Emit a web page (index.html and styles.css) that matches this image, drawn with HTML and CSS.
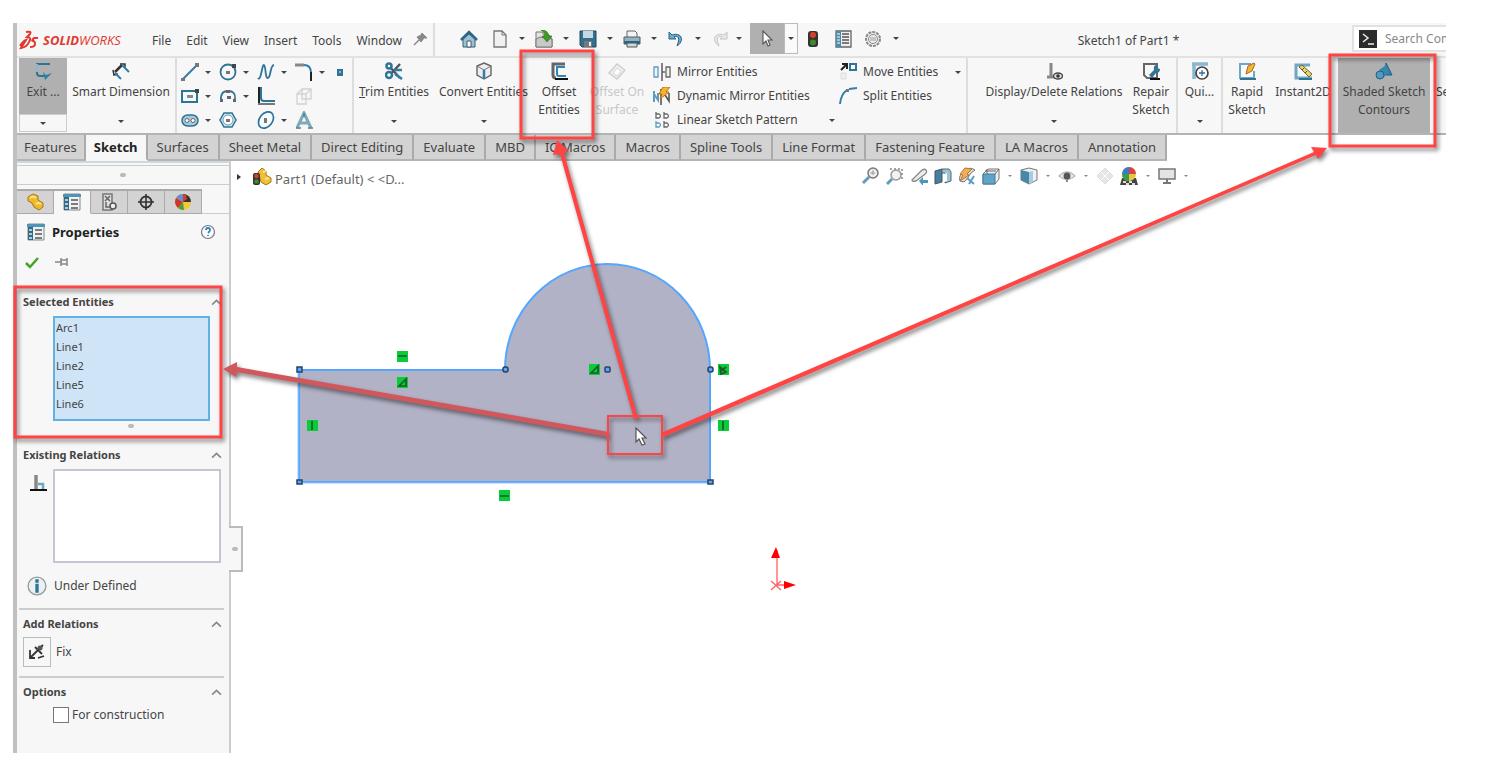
FILE: index.html
```html
<!DOCTYPE html>
<html lang="en">
<head>
    <meta charset="UTF-8">
    <meta name="viewport" content="width=device-width, initial-scale=1.0">
    <title>SOLIDWORKS - Sketch1 of Part1</title>
    <link rel="stylesheet" href="styles.css">
</head>
<body>

    <!-- Icon set -->
    <svg class="sprite" aria-hidden="true">
        <symbol id="i-pin" viewBox="0 0 18 18"><path d="M2 15l5-5" stroke="#888" stroke-width="1.5"/><path d="M10 3l5 5h-3l-3 4-4-5 4-2z" fill="#888" stroke="#888"/></symbol>
        <symbol id="i-home" viewBox="0 0 18 18"><path d="M3 9v8h12V9L9 4z" fill="#9dc0d2" stroke="#3b5d70"/><path d="M1 10l8-8 8 8" fill="none" stroke="#2c6687" stroke-width="2.5"/><path d="M7 11h4v6H7z" fill="#fff" stroke="#3b5d70"/></symbol>
        <symbol id="i-new" viewBox="0 0 18 18"><path d="M3 1h8l4 4v12H3z" fill="#f1f1f1" stroke="#777" stroke-width="1.3"/><path d="M11 1v4h4" fill="none" stroke="#777"/></symbol>
        <symbol id="i-open" viewBox="0 0 18 18"><path d="M1 2h6l2 3h5l3 4v8H1z" fill="#e4e4e4" stroke="#777"/><path d="M1 17V9l4-2 12 2v8z" fill="#c9c9c9" stroke="#777"/><path d="M6 0c5 0 7 2 8 6h3l-5 6-5-6h3c0-2-1-4-4-6z" fill="#3f9a27" stroke="#276d15" stroke-width=".6"/></symbol>
        <symbol id="i-save" viewBox="0 0 18 18"><path d="M1 1h16v16H3l-2-2z" fill="#33708f" stroke="#24485c"/><path d="M4 1h10v7H4z" fill="#c3dae5"/><path d="M5 11h8v6H5z" fill="#777"/><path d="M10 12h2v4h-2z" fill="#eee"/></symbol>
        <symbol id="i-print" viewBox="0 0 18 18"><path d="M4 7V1h8l2 2v4" fill="#f3f3f3" stroke="#666"/><path d="M1 7h16v7H1z" fill="#9ab1bd" stroke="#44606e"/><path d="M1 11h16v3H1z" fill="#2c6687"/><path d="M4 13h10v4H4z" fill="#c9d7de" stroke="#555"/></symbol>
        <symbol id="i-undo" viewBox="0 0 18 18"><path d="M2 2v7h7L7 7c3-2 6 0 4 6l-1 3c5-3 6-9 2-11-2-1-5-1-7 0z" fill="#6fa9c6" stroke="#24668a"/></symbol>
        <symbol id="i-redo" viewBox="0 0 18 18"><path d="M16 2v7H9l2-2C8 5 5 7 7 13l1 3C3 13 2 7 6 5c2-1 5-1 7 0z" fill="#e8e8e8" stroke="#c6c6c6"/></symbol>
        <symbol id="i-cursor" viewBox="0 0 18 18"><path d="M5 1v13l3-3 2 5 2-1-2-5h4z" fill="#fff" stroke="#555" stroke-width="1.1"/></symbol>
        <symbol id="i-traffic" viewBox="0 0 18 18"><rect x="4" y="1" width="10" height="16" rx="3" fill="#333"/><circle cx="9" cy="5" r="3" fill="#d8402b"/><circle cx="9" cy="12.500" r="3" fill="#3f8b26"/></symbol>
        <symbol id="i-options" viewBox="0 0 18 18"><path d="M2 1h15v16H2z" fill="#eee" stroke="#666" stroke-width="1.3"/><path d="M2 1h5v16H2z" fill="#4c8bac"/><path d="M3 4h3M3 7h3M3 10h3M3 13h3" stroke="#fff"/><path d="M8 4h7M8 7h7M8 10h7M8 13h7" stroke="#555" stroke-width="1.4"/></symbol>
        <symbol id="i-gear" viewBox="0 0 18 18"><circle cx="9" cy="9" r="7" fill="#eee" stroke="#888" stroke-width="2" stroke-dasharray="3 1"/><circle cx="9" cy="9" r="4.500" fill="none" stroke="#888"/><path d="M6 8h6M6 10h6" stroke="#999"/></symbol>
        <symbol id="i-exit" viewBox="0 0 18 18"><path d="M16 2H3v9q0 3 3 3h5" fill="none" stroke="#2f7396" stroke-width="2"/><path d="M3 2v8" stroke="#8ab8d0" stroke-width="2"/><path d="M9 10l3 3 6-2-7 7z" fill="#2f7fa9"/></symbol>
        <symbol id="i-dim" viewBox="0 0 18 18"><path d="M3 10l7-7" stroke="#333" stroke-width="2.500"/><path d="M1 8l1 5 4-1M8 2h5v4" fill="none" stroke="#333" stroke-width="1.500"/><path d="M3 11l6 6M10 3l7 7" stroke="#2f7fa9" stroke-width="2"/></symbol>
        <symbol id="i-line" viewBox="0 0 18 18"><path d="M2 16L16 2" stroke="#2f7fa9" stroke-width="2"/><path d="M0 15h4v3H0zM14 0h4v4h-4z" fill="#777"/></symbol>
        <symbol id="i-circle" viewBox="0 0 18 18"><circle cx="9" cy="9" r="7.500" fill="none" stroke="#2f7396" stroke-width="1.800"/><path d="M7 8h4v3H7z" fill="#777"/><path d="M13 1h4v4h-4z" fill="#444"/></symbol>
        <symbol id="i-spline" viewBox="0 0 18 18"><path d="M1 15C4 19 5 1 7 2s1 14 4 13 2-13 6-13" fill="none" stroke="#2f7396" stroke-width="1.800"/></symbol>
        <symbol id="i-fillet" viewBox="0 0 18 18"><path d="M0 2h9" stroke="#888" stroke-width="3"/><path d="M9 2q7 0 7 8" fill="none" stroke="#2f7fa9" stroke-width="2"/><path d="M16 9v9" stroke="#222" stroke-width="2"/></symbol>
        <symbol id="i-point" viewBox="0 0 18 18"><path d="M4 6h6v7H4z" fill="#2f7396"/><path d="M6 8h2v2H6z" fill="#8ab8d0"/></symbol>
        <symbol id="i-rect" viewBox="0 0 18 18"><path d="M1 4h15v11H1z" fill="#f4fbff" stroke="#2f7396" stroke-width="2"/><path d="M6 8h6v3H6z" fill="#888"/><path d="M14 2h4v4h-4z" fill="#444"/></symbol>
        <symbol id="i-arc" viewBox="0 0 18 18"><path d="M2 14Q1 4 9 4t7 8" fill="none" stroke="#2f7396" stroke-width="1.800"/><path d="M1 12h3v3H1zM14 12h3v3h-3zM8 9h4v3H8zM7 3h4v3H7z" fill="#666"/></symbol>
        <symbol id="i-lshape" viewBox="0 0 18 18"><path d="M4 0v11q0 3 3 3h11" fill="none" stroke="#2f7396" stroke-width="2"/><path d="M2 0v16" stroke="#222" stroke-width="2"/><path d="M1 17h17" stroke="#777" stroke-width="2"/></symbol>
        <symbol id="i-plane" viewBox="0 0 18 18"><path d="M7 2h9v10H7zM2 7h9v10H2zM7 2L2 7M16 2l-5 5" fill="none" stroke="#d2d2d2" stroke-width="1.300"/></symbol>
        <symbol id="i-slot" viewBox="0 0 18 18"><rect x="1" y="4" width="16" height="11" rx="5.500" fill="#a8c9da" stroke="#2f7396" stroke-width="1.500"/><circle cx="6" cy="9.500" r="2" fill="#fff" stroke="#666"/><circle cx="12" cy="9.500" r="2" fill="#fff" stroke="#666"/></symbol>
        <symbol id="i-poly" viewBox="0 0 18 18"><path d="M5 2h8l4 7-4 7H5L1 9z" fill="#d4e5ee" stroke="#2f7396" stroke-width="1.500"/><circle cx="9" cy="9" r="5" fill="#fff" stroke="#7199ad"/><path d="M7 8h4v3H7z" fill="#777"/></symbol>
        <symbol id="i-ellipse" viewBox="0 0 18 18"><ellipse cx="9" cy="9" rx="6.500" ry="9" transform="rotate(38 9 9)" fill="#f4fbff" stroke="#2f7396" stroke-width="1.700"/><path d="M7 7h3v5H7z" fill="#777"/></symbol>
        <symbol id="i-text" viewBox="0 0 18 18"><path d="M2 17L9 2l7 15M5 12h8" fill="none" stroke="#7fa8bb" stroke-width="3"/><path d="M1 17h5M13 17h5M9 2v4" stroke="#567d91" stroke-width="1.500"/></symbol>
        <symbol id="i-trim" viewBox="0 0 18 18"><path d="M3 3l12 13M15 2L3 15" stroke="#555" stroke-width="2.500"/><circle cx="4" cy="4" r="2.500" fill="#fff" stroke="#2f7396" stroke-width="2.500"/><circle cx="4" cy="13" r="3" fill="#fff" stroke="#2f7396" stroke-width="2.500"/><path d="M9 8h8M10 12l7 5" stroke="#2f7fa9" stroke-width="2.500"/></symbol>
        <symbol id="i-convert" viewBox="0 0 18 18"><path d="M9 1l7 3v9l-7 4-7-4V4z" fill="#eee" stroke="#666" stroke-width="1.400"/><path d="M2 4l7 4 7-4" fill="none" stroke="#777"/><path d="M9 8v9" stroke="#2f7fa9" stroke-width="2.500"/></symbol>
        <symbol id="i-offset" viewBox="0 0 18 18"><path d="M15 2H3v11q0 3 3 3" fill="none" stroke="#666" stroke-width="3"/><path d="M15 5H7v7q0 2 2 2h7" fill="none" stroke="#2f86b3" stroke-width="2"/><path d="M5 17h13" stroke="#111" stroke-width="2"/></symbol>
        <symbol id="i-offsurf" viewBox="0 0 18 18"><path d="M1 11l8-9 8 6-8 9z" fill="#efefef" stroke="#cfcfcf" stroke-width="1.400"/><path d="M5 11l4-5 4 3-4 5z" fill="#fff" stroke="#d6d6d6"/></symbol>
        <symbol id="i-mirror" viewBox="0 0 18 18"><path d="M1 4h4v10H1z" fill="#eaf4f9" stroke="#5d9cbc" stroke-width="1.300"/><path d="M9 0v18" stroke="#444" stroke-width="1.300"/><path d="M13 4h4v10h-4zM9 9h3" fill="#f1f1f1" stroke="#666" stroke-width="1.300"/></symbol>
        <symbol id="i-dynmirror" viewBox="0 0 18 18"><path d="M1 4v11M1 7l4 6V6" fill="none" stroke="#5d9cbc" stroke-width="2"/><path d="M8 2v16M12 8l4 6V6" fill="none" stroke="#555" stroke-width="1.600"/><path d="M10 0h7l-4 5h3l-9 7 2-5H6z" fill="#f3b530" stroke="#c36e16"/></symbol>
        <symbol id="i-pattern" viewBox="0 0 18 18"><g fill="#fff" stroke-width="1.300"><path d="M3 1v6h3q3-2 0-4H3M11 1v6h3q3-2 0-4h-3" stroke="#666"/><path d="M3 10v6h3q3-2 0-4H3" stroke="#5d9cbc"/><path d="M11 10v6h3q3-2 0-4h-3" stroke="#666"/></g></symbol>
        <symbol id="i-move" viewBox="0 0 18 18"><path d="M2 7l5-5M3 1h5v5" fill="none" stroke="#222" stroke-width="2"/><path d="M11 1h6v6h-6z" fill="#fff" stroke="#2f7396" stroke-width="2"/><path d="M2 10h5v6H2z" fill="#eee" stroke="#ddd"/></symbol>
        <symbol id="i-split" viewBox="0 0 18 18"><path d="M1 17Q2 7 8 3" fill="none" stroke="#2f7fa9" stroke-width="2"/><path d="M10 2l8-1" stroke="#2f7fa9" stroke-width="2"/><path d="M7 2h3v3H7z" fill="#777"/></symbol>
        <symbol id="i-relations" viewBox="0 0 18 18"><path d="M6 1v14M2 15h9" stroke="#888" stroke-width="3"/><ellipse cx="13" cy="14" rx="4.500" ry="3" fill="#ddd" stroke="#444" stroke-width="1.300"/><circle cx="13" cy="14" r="1.800" fill="#333"/></symbol>
        <symbol id="i-repair" viewBox="0 0 18 18"><path d="M2 2h13v14H5l-3-3z" fill="#f7f7f7" stroke="#666" stroke-width="2"/><path d="M7 13l5-5q-1-5 3-5v3l3 1q0 4-4 4l-4 5z" fill="#2f7396"/><path d="M8 17h10" stroke="#111" stroke-width="2"/></symbol>
        <symbol id="i-snaps" viewBox="0 0 18 18"><path d="M1 2h16M3 1v16" stroke="#8ab8d0" stroke-width="3.500"/><circle cx="11" cy="11" r="6" fill="#fff" stroke="#444" stroke-width="1.700"/><path d="M8 11h6M11 8v6" stroke="#2f7396" stroke-width="1.300"/></symbol>
        <symbol id="i-rapid" viewBox="0 0 18 18"><path d="M13 2H2v14h14V9" fill="#f8fcff" stroke="#6ea8c3" stroke-width="2"/><path d="M2 17h16" stroke="#2f7396" stroke-width="2"/><path d="M8 12l2-8 6-3 1 1-3 7z" fill="#f5b52d" stroke="#b4641c"/></symbol>
        <symbol id="i-instant" viewBox="0 0 18 18"><path d="M16 3H2v13h16" fill="#f3f9fc" stroke="#6ea8c3" stroke-width="3"/><path d="M5 17h13" stroke="#2f7396" stroke-width="2"/><path d="M5 5l3-2 10 9-3 3z" fill="#f0d35b" stroke="#6b6344"/><path d="M8 8l2-2M11 11l2-2" stroke="#555"/></symbol>
        <symbol id="i-shaded" viewBox="0 0 18 18"><path d="M10 13l1-12 6 12z" fill="#2f7fa9" stroke="#255f7e"/><path d="M4 8l7-5 3 7-5 5z" fill="#3a87ae"/><circle cx="5" cy="13" r="4" fill="#4f9bc2" stroke="#255f7e"/></symbol>
        <symbol id="i-cmd" viewBox="0 0 18 18"><path d="M0 0h18v18H0z" fill="#2c2c2c"/><path d="M4 4l5 4-5 4M9 14h6" fill="none" stroke="#eee" stroke-width="1.500"/></symbol>
        <symbol id="i-part" viewBox="0 0 18 18"><path d="M2 4l5-3 5 2v4l5 3v4l-4 3-5-3-2-4-4-2z" fill="#eeb92a" stroke="#a87613"/><path d="M4 5q3-3 6 0M10 11q2-2 5 0" fill="none" stroke="#fbe58a" stroke-width="2"/></symbol>
        <symbol id="i-props" viewBox="0 0 18 18"><path d="M1 1h16v16H1z" fill="#f1f1f1" stroke="#888"/><path d="M0 1h18v3H0z" fill="#4d94b8"/><path d="M1 4h5v13H1z" fill="#346a86"/><path d="M2 7h3M2 11h3M2 15h3" stroke="#dcebf2" stroke-width="1.500"/><path d="M8 7h7M8 11h7M8 15h7" stroke="#555" stroke-width="1.700"/></symbol>
        <symbol id="i-config" viewBox="0 0 18 18"><path d="M3 1h9v16H3z" fill="#ddd" stroke="#777" stroke-width="1.500"/><path d="M5 3l5 5M10 3L5 8M6 9v5h5" fill="none" stroke="#666" stroke-width="1.500"/><circle cx="13" cy="13" r="3" fill="#eee" stroke="#555" stroke-width="1.500"/></symbol>
        <symbol id="i-target" viewBox="0 0 18 18"><circle cx="9" cy="9" r="5.500" fill="none" stroke="#333" stroke-width="1.800"/><path d="M9 1v16M1 9h16" stroke="#333" stroke-width="1.600"/></symbol>
        <symbol id="i-ball" viewBox="0 0 18 18"><circle cx="9" cy="9" r="8" fill="#f3c735"/><path d="M9 9L2 5a8 8 0 0 1 7-4z" fill="#5e91d8"/><path d="M9 9V1a8 8 0 0 1 8 8z" fill="#333"/><path d="M9 9L2 5a8 8 0 0 0 2 10z" fill="#cf372d"/><path d="M9 9l-5 6a8 8 0 0 0 6 2z" fill="#48a045"/><path d="M9 9V1l3 1 1 4z" fill="#d63b31"/></symbol>
        <symbol id="i-help" viewBox="0 0 18 18"><circle cx="9" cy="9" r="6.500" fill="#fafafa" stroke="#778" stroke-width="1.200"/><path d="M7 7q0-2 2-2t2 2q0 1-2 3M9 12v1" fill="none" stroke="#2f86b3" stroke-width="1.800"/></symbol>
        <symbol id="i-check" viewBox="0 0 18 18"><path d="M3 10l4 4 8-9" fill="none" stroke="#43a326" stroke-width="2.500"/></symbol>
        <symbol id="i-pushpin" viewBox="0 0 18 18"><path d="M2 9h7M8 5v8M8 7h6M8 11h6M14 5v8" fill="none" stroke="#888" stroke-width="1.500"/></symbol>
        <symbol id="i-perp" viewBox="0 0 18 18"><path d="M7 1v14" stroke="#888" stroke-width="3.500"/><path d="M9 10h5v5" fill="none" stroke="#6ea8c3" stroke-width="2.500"/><path d="M1 16h17" stroke="#111" stroke-width="2"/></symbol>
        <symbol id="i-info" viewBox="0 0 18 18"><circle cx="9" cy="9" r="8" fill="#eaf1f4" stroke="#999" stroke-width="1.200"/><path d="M9 3v3M9 7v8" stroke="#2f7396" stroke-width="3"/></symbol>
        <symbol id="i-fix" viewBox="0 0 18 18"><path d="M2 15L15 2M7 4l7 7M2 7v8h5M10 15l6-2" fill="none" stroke="#333" stroke-width="1.800"/><circle cx="12" cy="5" r="2.500" fill="#555"/></symbol>
        <symbol id="i-zoomfit" viewBox="0 0 18 18"><path d="M1 16l6-6" stroke="#5d9cbc" stroke-width="3"/><circle cx="11" cy="6" r="5" fill="#eee" stroke="#777" stroke-width="1.500"/><path d="M8 6h5M11 3v5" stroke="#999"/></symbol>
        <symbol id="i-zoomarea" viewBox="0 0 18 18"><path d="M1 17l5-5" stroke="#5d9cbc" stroke-width="3"/><circle cx="10" cy="8" r="5" fill="#f1f1f1" stroke="#999" stroke-width="1.500"/><path d="M4 2h12v11" fill="none" stroke="#888" stroke-dasharray="2 2" stroke-width="1.500"/></symbol>
        <symbol id="i-prev" viewBox="0 0 18 18"><path d="M2 13l9-9q3-3 5-1t-2 5l-8 6q-4 1-4-1z" fill="#ececec" stroke="#888" stroke-width="1.300"/><path d="M9 14l4-4v3h5v3h-5v3z" fill="#4e95b9"/></symbol>
        <symbol id="i-section" viewBox="0 0 18 18"><path d="M1 4l7-2v13l-7 2z" fill="#487f9c" stroke="#456"/><path d="M8 2h7l2 3v9l-6 2V6H8z" fill="#9dc3d6" stroke="#567"/><path d="M10 7l3-1v8l-3 1z" fill="#fff"/></symbol>
        <symbol id="i-dynview" viewBox="0 0 18 18"><path d="M2 14q-2-5 4-10 6-5 11-1-5 3-6 6t-5 6z" fill="#ddd" stroke="#777"/><path d="M7 1l7 1-5 5 2 1-9 6 3-6-3-1z" fill="#f0b058" stroke="#bd7132"/><path d="M9 11l7 6M16 9l-5 8" stroke="#5d9cbc" stroke-width="2"/></symbol>
        <symbol id="i-cube" viewBox="0 0 18 18"><path d="M1 7l5-5h11v10l-4 5H1z" fill="#eee" stroke="#777"/><path d="M1 7h12v10H1z" fill="#5fa4c6" stroke="#3f7d9d"/><path d="M3 4h11M5 2v5M13 7l4-5" stroke="#666"/></symbol>
        <symbol id="i-style" viewBox="0 0 18 18"><path d="M9 1l8 2v10l-8 4-8-4V3z" fill="#f0f0f0" stroke="#777"/><path d="M1 3l8 2v12l-8-4z" fill="#4688a8"/><path d="M9 5l4-1v11l-4 2z" fill="#a9ccdc"/></symbol>
        <symbol id="i-eye" viewBox="0 0 18 18"><path d="M1 9q8-8 16 0-8 7-16 0z" fill="#eee" stroke="#bbb" stroke-width="1.300"/><circle cx="9" cy="9" r="3.500" fill="#555"/><path d="M9 12v3" stroke="#888" stroke-width="2"/></symbol>
        <symbol id="i-appear" viewBox="0 0 18 18"><path d="M9 1l8 8-8 8-8-8z" fill="#e6e6e6" stroke="#ddd"/><path d="M5 5l8 8M13 5l-8 8" stroke="#fff"/></symbol>
        <symbol id="i-scene" viewBox="0 0 18 18"><path d="M0 18l2-7h14l2 7z" fill="#444"/><path d="M3 15h3M9 15h3M6 17h3M12 17h3" stroke="#ddd" stroke-width="2"/><circle cx="9" cy="7" r="7" fill="#e5c840"/><path d="M9 7V0a7 7 0 0 0-7 7z" fill="#3979cf"/><path d="M9 7V0a7 7 0 0 1 7 7z" fill="#d74340"/><path d="M9 7H2a7 7 0 0 0 7 7z" fill="#3b9d4a"/></symbol>
        <symbol id="i-monitor" viewBox="0 0 18 18"><path d="M1 2h16v10H1z" fill="#e4e4e4" stroke="#777" stroke-width="1.500"/><path d="M9 12v4M5 16h8" stroke="#777" stroke-width="2"/></symbol>
        <symbol id="i-chev" viewBox="0 0 10 10"><path d="M1 7l4-4 4 4" fill="none" stroke="#888" stroke-width="1.500"/></symbol>
    </svg>

    <main class="app">

        <!-- Menu bar -->
        <header class="menubar">
            <div class="logo">
                <svg class="logo-mark" viewBox="0 0 20 20" aria-hidden="true"><path d="M7 2q6-1 4 2L8 7q5 0 2 5-2 5-8 6l5-8q-3 1-6 6M11 17q5 0 5-3t-2-3 1-3h4" fill="none" stroke="#e0392f" stroke-width="2"/></svg>
                <span><b>SOLID</b>WORKS</span>
            </div>
            <nav class="menus">
                <button>File</button>
                <button>Edit</button>
                <button>View</button>
                <button>Insert</button>
                <button>Tools</button>
                <button>Window</button>
            </nav>
            <button class="pin" aria-label="Pin menu"><svg><use href="#i-pin"/></svg></button>
            <div class="quick">
                <button class="home" aria-label="Home"><svg><use href="#i-home"/></svg></button>
                <button aria-label="New"><svg><use href="#i-new"/></svg></button><button class="drop" aria-label="New options"></button>
                <button aria-label="Open"><svg><use href="#i-open"/></svg></button><button class="drop" aria-label="Open options"></button>
                <button aria-label="Save"><svg><use href="#i-save"/></svg></button><button class="drop" aria-label="Save options"></button>
                <button aria-label="Print"><svg><use href="#i-print"/></svg></button><button class="drop" aria-label="Print options"></button>
                <button aria-label="Undo"><svg><use href="#i-undo"/></svg></button><button class="drop" aria-label="Undo options"></button>
                <button aria-label="Redo"><svg><use href="#i-redo"/></svg></button><button class="drop narrow" aria-label="Redo options"></button>
                <button class="select-tool" aria-label="Select"><svg><use href="#i-cursor"/></svg></button><button class="drop select-drop" aria-label="Select options"></button>
                <button class="wide" aria-label="Rebuild"><svg><use href="#i-traffic"/></svg></button>
                <button class="wide" aria-label="File properties"><svg><use href="#i-options"/></svg></button>
                <button class="wide" aria-label="Options"><svg><use href="#i-gear"/></svg></button><button class="drop narrow" aria-label="More options"></button>
            </div>
            <div class="doc-title">Sketch1 of Part1 *</div>
            <div class="search">
                <svg><use href="#i-cmd"/></svg>
                <input type="text" placeholder="Search Com" aria-label="Search commands">
            </div>
        </header>

        <!-- Ribbon -->
        <section class="ribbon">
            <div class="group first">
                <div class="exit">
                    <button class="exit-main"><svg><use href="#i-exit"/></svg>Exit ...</button>
                    <button class="drop" aria-label="Exit options"></button>
                </div>
                <button class="tool smart has-drop"><svg><use href="#i-dim"/></svg>Smart Dimension</button>
            </div>

            <div class="group draw">
                <div><button aria-label="Line"><svg><use href="#i-line"/></svg></button><button class="drop" aria-label="Line types"></button></div>
                <div><button aria-label="Circle"><svg><use href="#i-circle"/></svg></button><button class="drop" aria-label="Circle types"></button></div>
                <div><button aria-label="Spline"><svg><use href="#i-spline"/></svg></button><button class="drop" aria-label="Spline types"></button></div>
                <div><button aria-label="Fillet"><svg><use href="#i-fillet"/></svg></button><button class="drop" aria-label="Fillet types"></button></div>
                <div><button aria-label="Point"><svg><use href="#i-point"/></svg></button></div>
                <div><button aria-label="Rectangle"><svg><use href="#i-rect"/></svg></button><button class="drop" aria-label="Rectangle types"></button></div>
                <div><button aria-label="Arc"><svg><use href="#i-arc"/></svg></button><button class="drop" aria-label="Arc types"></button></div>
                <div><button aria-label="Contour"><svg><use href="#i-lshape"/></svg></button></div>
                <div><button aria-label="Plane" disabled><svg><use href="#i-plane"/></svg></button></div>
                <div></div>
                <div><button aria-label="Slot"><svg><use href="#i-slot"/></svg></button><button class="drop" aria-label="Slot types"></button></div>
                <div><button aria-label="Polygon"><svg><use href="#i-poly"/></svg></button></div>
                <div><button aria-label="Ellipse"><svg><use href="#i-ellipse"/></svg></button><button class="drop" aria-label="Ellipse types"></button></div>
                <div><button aria-label="Text"><svg><use href="#i-text"/></svg></button></div>
            </div>

            <div class="group entities">
                <button class="tool trim has-drop"><svg><use href="#i-trim"/></svg><span><u>T</u>rim Entities</span></button>
                <button class="tool convert has-drop"><svg><use href="#i-convert"/></svg>Convert Entities</button>
                <button class="tool offset"><svg><use href="#i-offset"/></svg>Offset<br>Entities</button>
                <button class="tool offset-on" disabled><svg><use href="#i-offsurf"/></svg>Offset On<br>Surface</button>
                <div class="stack mirror">
                    <div><button><svg><use href="#i-mirror"/></svg>Mirror Entities</button></div>
                    <div><button><svg><use href="#i-dynmirror"/></svg>Dynamic Mirror Entities</button></div>
                    <div><button><svg><use href="#i-pattern"/></svg>Linear Sketch Pattern</button><button class="drop" aria-label="Pattern types"></button></div>
                </div>
                <div class="stack move">
                    <div><button><svg><use href="#i-move"/></svg>Move Entities</button><button class="drop" aria-label="Move types"></button></div>
                    <div><button><svg><use href="#i-split"/></svg>Split Entities</button></div>
                </div>
            </div>

            <div class="group relations">
                <button class="tool display has-drop"><svg><use href="#i-relations"/></svg>Display/Delete Relations</button>
                <button class="tool repair"><svg><use href="#i-repair"/></svg>Repair<br>Sketch</button>
            </div>

            <div class="group">
                <button class="tool snaps has-drop"><svg><use href="#i-snaps"/></svg>Qui...</button>
            </div>

            <div class="group last">
                <button class="tool rapid"><svg><use href="#i-rapid"/></svg>Rapid<br>Sketch</button>
                <button class="tool instant"><svg><use href="#i-instant"/></svg>Instant2D</button>
                <button class="tool shaded"><svg><use href="#i-shaded"/></svg>Shaded Sketch<br>Contours</button>
                <button class="tool segment">Se</button>
            </div>
        </section>

        <!-- Command tabs -->
        <nav class="tabs">
            <button class="first-tab">Features</button>
            <button class="active">Sketch</button>
            <button>Surfaces</button>
            <button>Sheet Metal</button>
            <button>Direct Editing</button>
            <button>Evaluate</button>
            <button>MBD</button>
            <button>IC Macros</button>
            <button>Macros</button>
            <button>Spline Tools</button>
            <button>Line Format</button>
            <button>Fastening Feature</button>
            <button>LA Macros</button>
            <button>Annotation</button>
        </nav>

        <div class="workspace">

            <!-- Property manager -->
            <aside class="panel">
                <div class="splitter"><i class="grip"></i></div>
                <nav class="panel-tabs">
                    <button aria-label="Feature tree"><svg><use href="#i-part"/></svg></button>
                    <button class="active" aria-label="Properties"><svg><use href="#i-props"/></svg></button>
                    <button aria-label="Configurations"><svg><use href="#i-config"/></svg></button>
                    <button aria-label="Dimensions"><svg><use href="#i-target"/></svg></button>
                    <button aria-label="Display"><svg><use href="#i-ball"/></svg></button>
                </nav>
                <div class="panel-title">
                    <svg><use href="#i-props"/></svg>
                    <h1>Properties</h1>
                    <button aria-label="Help"><svg><use href="#i-help"/></svg></button>
                </div>
                <div class="confirm">
                    <button aria-label="OK"><svg><use href="#i-check"/></svg></button>
                    <button aria-label="Keep visible"><svg><use href="#i-pushpin"/></svg></button>
                </div>

                <section class="selected">
                    <h2><label for="entities">Selected Entities</label><svg><use href="#i-chev"/></svg></h2>
                    <select id="entities" multiple size="5">
                        <option>Arc1</option>
                        <option>Line1</option>
                        <option>Line2</option>
                        <option>Line5</option>
                        <option>Line6</option>
                    </select>
                    <i class="grip"></i>
                </section>

                <section class="existing">
                    <h2><label for="relations">Existing Relations</label><svg><use href="#i-chev"/></svg></h2>
                    <div class="relation-row">
                        <svg><use href="#i-perp"/></svg>
                        <select id="relations" multiple size="4"></select>
                    </div>
                    <p class="status"><svg><use href="#i-info"/></svg>Under Defined</p>
                </section>

                <section class="add">
                    <h2>Add Relations<svg><use href="#i-chev"/></svg></h2>
                    <button class="fix"><span><svg><use href="#i-fix"/></svg></span>Fix</button>
                </section>

                <section class="options">
                    <h2>Options<svg><use href="#i-chev"/></svg></h2>
                    <label class="check"><input type="checkbox">For construction</label>
                </section>

                <button class="handle" aria-label="Collapse panel"><i class="grip"></i></button>
            </aside>

            <!-- Graphics area -->
            <section class="graphics">
                <div class="hud">
                    <div class="tree">
                        <button class="expand" aria-label="Expand tree"></button>
                        <svg viewBox="0 0 20 20" aria-hidden="true"><path d="M6 5l4-4 4 3v4l5 3v4l-5 3-5-3z" fill="#eebf38" stroke="#a87613"/><path d="M11 5l3-1M13 12l4-1" stroke="#fbe58a" stroke-width="2"/><rect x="1" y="6" width="7" height="12" rx="2" fill="#333"/><circle cx="4.500" cy="9" r="2.300" fill="#d8402b"/><circle cx="4.500" cy="14.500" r="2.300" fill="#3f8b26"/></svg>
                        <span>Part1 (Default) &lt; &lt;D...</span>
                    </div>
                    <div class="views">
                        <button aria-label="Zoom to fit"><svg><use href="#i-zoomfit"/></svg></button>
                        <button aria-label="Zoom to area"><svg><use href="#i-zoomarea"/></svg></button>
                        <button aria-label="Previous view"><svg><use href="#i-prev"/></svg></button>
                        <button aria-label="Section view"><svg><use href="#i-section"/></svg></button>
                        <button aria-label="Dynamic view"><svg><use href="#i-dynview"/></svg></button>
                        <button aria-label="View orientation"><svg><use href="#i-cube"/></svg></button><button class="drop" aria-label="Orientations"></button>
                        <button aria-label="Display style"><svg><use href="#i-style"/></svg></button><button class="drop" aria-label="Display styles"></button>
                        <button aria-label="Hide or show"><svg><use href="#i-eye"/></svg></button><button class="drop" aria-label="Hide or show items"></button>
                        <button aria-label="Edit appearance"><svg><use href="#i-appear"/></svg></button>
                        <button aria-label="Apply scene"><svg><use href="#i-scene"/></svg></button><button class="drop" aria-label="Scenes"></button>
                        <button aria-label="View settings"><svg><use href="#i-monitor"/></svg></button><button class="drop" aria-label="View settings list"></button>
                    </div>
                </div>
            </section>
        </div>

        <!-- Sketch geometry, callouts and arrows -->
        <svg class="canvas" viewBox="17 23 1429 730" aria-hidden="true">
            <path d="M299 370H505A102.500 106 0 0 1 710 370V482H299Z" fill="#b2b2c6" stroke="#55a6ff" stroke-width="2"/>
            <path d="M298 370V483H711" fill="none" stroke="#8fc4ff" stroke-width="1"/>
            <g fill="#55a6ff" stroke="#2c3f5c" stroke-width="1.500">
                <rect x="297" y="367" width="5" height="5"/>
                <rect x="503" y="367" width="5" height="5" rx="2"/>
                <rect x="605" y="367" width="5" height="5" rx="1"/>
                <rect x="708" y="367" width="5" height="5" rx="2"/>
                <rect x="297" y="480" width="5" height="4"/>
                <rect x="708" y="480" width="5" height="4"/>
            </g>
            <g fill="#08cc38">
                <path d="M397 351h11v11h-11zM397 377h11v11h-11zM307 420h11v11h-11zM589 364h11v11h-11zM718 364h11v11h-11zM718 420h11v11h-11zM499 490h11v11h-11z"/>
            </g>
            <path d="M398 356h9M500 496h9M312 421v9M723 421v9M399 386l7-7v7zM591 373l7-7v7zM720 367l6 5-5 2zM721 371l5-4" fill="none" stroke="#1c5a2b" stroke-width="1.700"/>
            <path d="M777 550v35h14M771 581l10 9M771 590l10-9" fill="none" stroke="#ff6060" stroke-width="1.300"/>
            <path d="M776 547l4 11h-9zM796 585l-12-4v8z" fill="#f00"/>
            <g class="callout">
                <path d="M609 432L237 367v-5l-14 7 13 8 1-5 372 65z" fill="#d0585d"/>
                <path d="M634 419L560 154l-7 1 4-15 12 11-5 2 74 266z" fill="#ff4444"/>
                <path d="M661 433L1314 152l-3-5 16 1-9 11-2-4L663 437z" fill="#ff4444"/>
                <rect x="608" y="416" width="54" height="38" fill="none" stroke="#ff4444" stroke-width="2"/>
                <g fill="none" stroke="#ff4444" stroke-width="3">
                    <rect x="521" y="51" width="72" height="87"/>
                    <rect x="1330" y="55" width="105" height="91"/>
                    <rect x="15" y="287" width="206" height="150"/>
                </g>
            </g>
            <path d="M636 428v14l3-3 3 6 3-1-3-6h4z" fill="#fff" stroke="#555" stroke-width="1.200"/>
        </svg>
    </main>

</body>
</html>
```

FILE: styles.css
```css
/* General Styling */
* {
    box-sizing: border-box;
}

body {
    margin: 0;
    padding: 23px 42px 13px 13px;
    background: #fff;
    color: #444;
    font-family: "Noto Sans", sans-serif;
    font-size: 12px;
    line-height: 18px;
}

button {
    padding: 0;
    border: none;
    background: none;
    color: inherit;
    font: inherit;
    white-space: nowrap;
}

svg {
    display: block;
    flex: none;
    width: 18px;
    height: 18px;
}

.sprite {
    display: none;
}

.app {
    position: relative;
    display: flex;
    flex-direction: column;
    min-height: calc(100vh - 36px);
    border-left: 4px solid #c0c0c0;
}

.drop {
    display: flex;
    align-items: center;
    justify-content: center;
}

.drop::after,
.has-drop::after {
    content: "";
    border: 3px solid transparent;
    border-top-color: #444;
    border-bottom: none;
}

/* Menu bar */
.menubar {
    display: flex;
    height: 35px;
    background: #f7f7f7;
    border-bottom: 2px solid #e2e2e2;
    overflow: hidden;
}

.logo {
    display: flex;
    align-items: center;
    gap: 4px;
    width: 135px;
    padding-left: 2px;
    color: #e0392f;
    font-family: "Open Sans", sans-serif;
    font-size: 13px;
    font-style: italic;
}

.logo-mark {
    width: 20px;
    height: 20px;
}

.menus {
    display: flex;
    gap: 15px;
    padding-top: 3px;
}

.pin {
    padding: 0 3px 2px 10px;
    border-right: 2px solid #ddd;
}

.quick {
    display: flex;
    height: 31px;
}

.quick button {
    display: flex;
    align-items: center;
    justify-content: center;
    width: 22px;
}

.quick .home {
    width: 40px;
    margin-left: 14px;
}

.quick .narrow {
    width: 17px;
}

.quick .wide {
    width: 30px;
}

.quick .select-tool {
    width: 34px;
    margin-left: 2px;
    background: #b0b0b0;
}

.quick .select-drop {
    width: 14px;
    border: 1px solid #bbb;
    background: #fafafa;
}

.doc-title {
    flex: 1;
    padding-top: 9px;
    text-align: center;
}

.search {
    display: flex;
    align-items: center;
    gap: 8px;
    width: 94px;
    height: 27px;
    margin-top: 2px;
    padding-left: 5px;
    border: 2px solid #e2e2e2;
    border-right: none;
    background: #fff;
}

.search input {
    flex: 1;
    min-width: 0;
    padding: 0;
    border: none;
    background: none;
    font: inherit;
}

.search input::placeholder {
    color: #888;
}

/* Ribbon */
.ribbon {
    display: flex;
    height: 77px;
    background: #f7f7f7;
    border-bottom: 2px solid #b4b4b4;
    overflow: hidden;
}

.group {
    display: flex;
    flex: none;
    border-right: 2px solid #ddd;
}

.first {
    padding-left: 2px;
}

.exit {
    display: flex;
    flex-direction: column;
    width: 48px;
}

.exit-main {
    display: flex;
    flex-direction: column;
    align-items: center;
    gap: 3px;
    height: 56px;
    padding-top: 4px;
    background: #b0b0b0;
}

.exit .drop {
    height: 18px;
    border: 1px solid #ccc;
}

.tool {
    display: flex;
    flex-direction: column;
    align-items: center;
    justify-content: flex-start;
    flex: none;
    padding-top: 4px;
}

.tool svg {
    margin-bottom: 3px;
}

.tool.has-drop::after {
    margin-top: 19px;
}

.tool:disabled {
    color: #c8c8c8;
}

.smart {
    width: 108px;
}

.draw {
    display: grid;
    grid-template-columns: repeat(4, 38px) 20px;
    grid-template-rows: repeat(3, 24px);
    padding: 2px 0 0 4px;
    width: 177px;
}

.draw div,
.draw button {
    display: flex;
    align-items: center;
}

.draw .drop {
    width: 18px;
}

.trim {
    width: 80px;
}

.convert {
    width: 99px;
}

.offset {
    width: 52px;
}

.offset-on {
    width: 64px;
}

.entities {
    width: 614px;
}

.stack {
    display: grid;
    grid-template-rows: repeat(3, 24px);
    padding: 2px 0 0 4px;
}

.stack div,
.stack button {
    display: flex;
    align-items: center;
}

.stack button {
    gap: 6px;
}

.stack .drop {
    justify-content: flex-end;
    flex: 1;
}

.mirror {
    width: 186px;
}

.move {
    width: 126px;
}

.relations {
    padding: 0 6px 0 8px;
    width: 210px;
}

.display {
    width: 156px;
}

.repair {
    width: 38px;
}

.snaps {
    width: 43px;
}

.rapid {
    width: 48px;
}

.instant {
    width: 64px;
}

.shaded {
    width: 92px;
    margin: 0 6px 0 3px;
    background: #b0b0b0;
}

.segment {
    align-items: flex-start;
    padding-top: 25px;
}

.last {
    border: none;
    flex: 1;
    min-width: 0;
}

/* Command tabs */
.tabs {
    display: flex;
    height: 26px;
    font-size: 13px;
}

.tabs button {
    padding: 0 9px;
    border-right: 2px solid #aaa;
    border-bottom: 2px solid #b4b4b4;
    background: #d3d3d3;
}

.tabs .first-tab {
    padding: 0 7px;
}

.tabs .active {
    padding: 0 8px;
    border-bottom-color: #f7f7f7;
    background: #f7f7f7;
    color: #222;
    font-weight: bold;
}

/* Property manager */
.workspace {
    display: flex;
    flex: 1;
}

.panel {
    position: relative;
    flex: none;
    width: 214px;
    background: #f7f7f7;
    border-top: 2px solid #cdd9dd;
    border-right: 2px solid #ccc;
}

.grip {
    display: block;
    width: 6px;
    height: 4px;
    border-radius: 3px;
    background: #bbb;
}

.splitter {
    display: flex;
    align-items: center;
    justify-content: center;
    height: 20px;
    margin-top: 2px;
    border-top: 1px solid #ccc;
    border-bottom: 1px solid #ccc;
}

.panel-tabs {
    display: flex;
    height: 25px;
    margin-top: 4px;
    border-bottom: 1px solid #ccc;
}

.panel-tabs button {
    display: flex;
    align-items: center;
    justify-content: center;
    width: 37px;
    height: 25px;
    border: 1px solid #aaa;
    border-width: 2px 1px 1px 0;
    background: #d3d3d3;
}

.panel-tabs .active {
    border-bottom-color: #f7f7f7;
    background: #f7f7f7;
}

.panel-title {
    display: flex;
    align-items: center;
    gap: 7px;
    height: 36px;
    padding: 0 12px 0 10px;
}

.panel-title h1 {
    flex: 1;
    margin: 0;
    color: #222;
    font-size: 13px;
}

.confirm {
    display: flex;
    align-items: center;
    gap: 12px;
    height: 24px;
    padding-left: 6px;
}

.panel section {
    margin: 0 5px 0 2px;
    padding-left: 4px;
}

.panel h2 {
    display: flex;
    align-items: center;
    justify-content: space-between;
    margin: 0 2px 0 0;
    font-size: 11px;
    line-height: 18px;
}

.panel h2 svg {
    width: 11px;
    height: 11px;
}

.panel select {
    display: block;
    appearance: none;
    margin: 0;
    padding: 0;
    border-radius: 0;
    outline: none;
    overflow: hidden;
    font: inherit;
}

.panel .selected {
    height: 171px;
    padding-top: 19px;
}

.panel #entities {
    width: 157px;
    height: 105px;
    margin: 5px 0 3px 30px;
    padding-top: 2px;
    border: 2px solid #61b1e4;
    background: #cfe4f7;
    font-size: 11px;
}

#entities option {
    min-height: 19px;
    padding: 0 1px;
    color: #444;
    line-height: 19px;
}

.selected .grip {
    margin-left: 105px;
}

.panel .existing {
    height: 163px;
    padding-top: 1px;
}

.relation-row {
    display: flex;
    gap: 6px;
    margin-top: 5px;
    padding-left: 6px;
}

.relation-row svg {
    margin-top: 5px;
}

#relations {
    width: 168px;
    height: 94px;
    border: 2px solid #c3c7d4;
    background: #fff;
}

.status {
    display: flex;
    align-items: center;
    gap: 7px;
    margin: 13px 0 0;
    padding-left: 4px;
}

.status svg {
    width: 20px;
    height: 20px;
}

.panel .add,
.panel .options {
    height: 68px;
    padding-top: 5px;
    border-top: 2px solid #ccc;
}

.fix {
    display: flex;
    align-items: center;
    gap: 5px;
    margin-top: 4px;
}

.fix span {
    padding: 5px 4px;
    border: 1px solid #bbb;
}

.check {
    display: flex;
    align-items: center;
    gap: 3px;
    margin: 5px 0 0 30px;
}

.check input {
    appearance: none;
    width: 16px;
    height: 16px;
    margin: 0;
    border: 1px solid #777;
    background: #fff;
}

.handle {
    position: absolute;
    top: 363px;
    right: -14px;
    width: 14px;
    height: 46px;
    padding-left: 3px;
    border: 2px solid #bbb;
    border-left: none;
    background: #f7f7f7;
}

/* Graphics area */
.graphics {
    flex: 1;
    min-width: 0;
}

.hud {
    display: flex;
}

.tree {
    display: flex;
    align-items: center;
    flex: 0 0 628px;
    gap: 3px;
    height: 20px;
    margin-top: 6px;
    padding-left: 6px;
    color: #666;
    font-size: 13px;
}

.tree svg {
    width: 20px;
    height: 20px;
}

.tree span {
    padding-top: 4px;
}

.expand {
    width: 12px;
    height: 12px;
}

.expand::after {
    content: "";
    display: block;
    width: 0;
    border: 3px solid transparent;
    border-left: 4px solid #333;
    border-right: none;
}

.views {
    display: flex;
    height: 30px;
}

.views button {
    display: flex;
    align-items: center;
    justify-content: center;
    width: 24px;
}

.views .drop {
    width: 14px;
}

.views .drop::after {
    border-width: 2px;
    border-bottom: none;
    border-top-color: #888;
}

/* Callouts */
.canvas {
    position: absolute;
    top: 0;
    left: 0;
    width: 1429px;
    height: 730px;
    overflow: visible;
    pointer-events: none;
}

.callout {
    filter: drop-shadow(2px 3px 2px rgba(0, 0, 0, 0.5));
}
```
